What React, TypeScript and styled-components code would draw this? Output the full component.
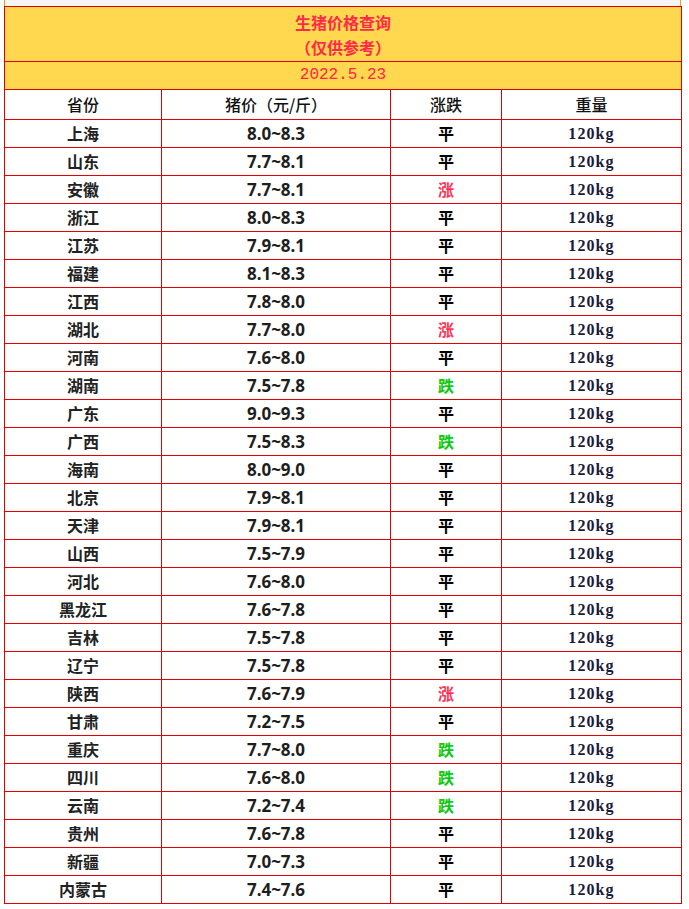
import styled, { createGlobalStyle } from "styled-components";

const GlobalStyle = createGlobalStyle`
  html, body {
    margin: 0;
    padding: 0;
    background: #fff;
  }
`;

const Page = styled.div`
  padding-left: 4px;
  width: 677px;
`;

const TopStrip = styled.div`
  height: 6px;
  background: #f5f5f5;
  border-left: 1px solid #f0a020;
  border-right: 1px solid #f0a020;
  box-sizing: border-box;
`;

const Table = styled.table`
  border-collapse: collapse;
  table-layout: fixed;
  width: 677px;
  border: 1px solid #ff0000;
  font-family: "Noto Sans CJK SC", sans-serif;
`;

const Cell = styled.td`
  border: 1px solid #e00000;
  padding: 0;
  text-align: center;
  vertical-align: middle;
  height: 27px;
  line-height: 27px;
`;

const TitleCell = styled(Cell)`
  background: #ffd84f;
  color: #ff2a4a;
  font-size: 16px;
  font-weight: 700;
  line-height: 25px;
  height: 53px;
  padding-top: 1px;
`;

const DateCell = styled(Cell)`
  background: #ffd84f;
  color: #ff2448;
  font-family: "Liberation Mono", monospace;
  font-size: 16px;
`;

const HeadCell = styled(Cell)`
  height: 29px;
  font-size: 16px;
  color: #111;
  font-weight: 500;
`;

const Province = styled(Cell)`
  font-size: 16px;
  font-weight: 700;
  color: #222;
`;

const Price = styled(Cell)`
  font-family: "Noto Sans", sans-serif;
  font-size: 17px;
  font-weight: 700;
  color: #1e1e1e;
`;

const Trend = styled(Cell)<{ $kind: string }>`
  font-size: 16px;
  font-weight: 700;
  color: ${(p) =>
    p.$kind === "涨" ? "#ff3355" : p.$kind === "跌" ? "#11c811" : "#000"};
`;

const Weight = styled(Cell)`
  font-family: "Liberation Serif", serif;
  font-size: 16px;
  font-weight: 700;
  letter-spacing: 1.1px;
  color: #1a1a3a;
`;

const rows: [string, string, string][] = [
  ["上海", "8.0~8.3", "平"],
  ["山东", "7.7~8.1", "平"],
  ["安徽", "7.7~8.1", "涨"],
  ["浙江", "8.0~8.3", "平"],
  ["江苏", "7.9~8.1", "平"],
  ["福建", "8.1~8.3", "平"],
  ["江西", "7.8~8.0", "平"],
  ["湖北", "7.7~8.0", "涨"],
  ["河南", "7.6~8.0", "平"],
  ["湖南", "7.5~7.8", "跌"],
  ["广东", "9.0~9.3", "平"],
  ["广西", "7.5~8.3", "跌"],
  ["海南", "8.0~9.0", "平"],
  ["北京", "7.9~8.1", "平"],
  ["天津", "7.9~8.1", "平"],
  ["山西", "7.5~7.9", "平"],
  ["河北", "7.6~8.0", "平"],
  ["黑龙江", "7.6~7.8", "平"],
  ["吉林", "7.5~7.8", "平"],
  ["辽宁", "7.5~7.8", "平"],
  ["陕西", "7.6~7.9", "涨"],
  ["甘肃", "7.2~7.5", "平"],
  ["重庆", "7.7~8.0", "跌"],
  ["四川", "7.6~8.0", "跌"],
  ["云南", "7.2~7.4", "跌"],
  ["贵州", "7.6~7.8", "平"],
  ["新疆", "7.0~7.3", "平"],
  ["内蒙古", "7.4~7.6", "平"],
];

const App = () => {
  return (
    <Page>
      <GlobalStyle />
      <TopStrip />
      <Table>
        <colgroup>
          <col style={{ width: 157 }} />
          <col style={{ width: 229 }} />
          <col style={{ width: 111 }} />
          <col style={{ width: 180 }} />
        </colgroup>
        <tbody>
          <tr>
            <TitleCell colSpan={4}>
              生猪价格查询
              <br />
              （仅供参考）
            </TitleCell>
          </tr>
          <tr>
            <DateCell colSpan={4}>2022.5.23</DateCell>
          </tr>
          <tr>
            <HeadCell>省份</HeadCell>
            <HeadCell>猪价（元/斤）</HeadCell>
            <HeadCell>涨跌</HeadCell>
            <HeadCell>重量</HeadCell>
          </tr>
          {rows.map(([name, price, trend]) => (
            <tr key={name}>
              <Province>{name}</Province>
              <Price>{price}</Price>
              <Trend $kind={trend}>{trend}</Trend>
              <Weight>120kg</Weight>
            </tr>
          ))}
        </tbody>
      </Table>
    </Page>
  );
};

export default App;
